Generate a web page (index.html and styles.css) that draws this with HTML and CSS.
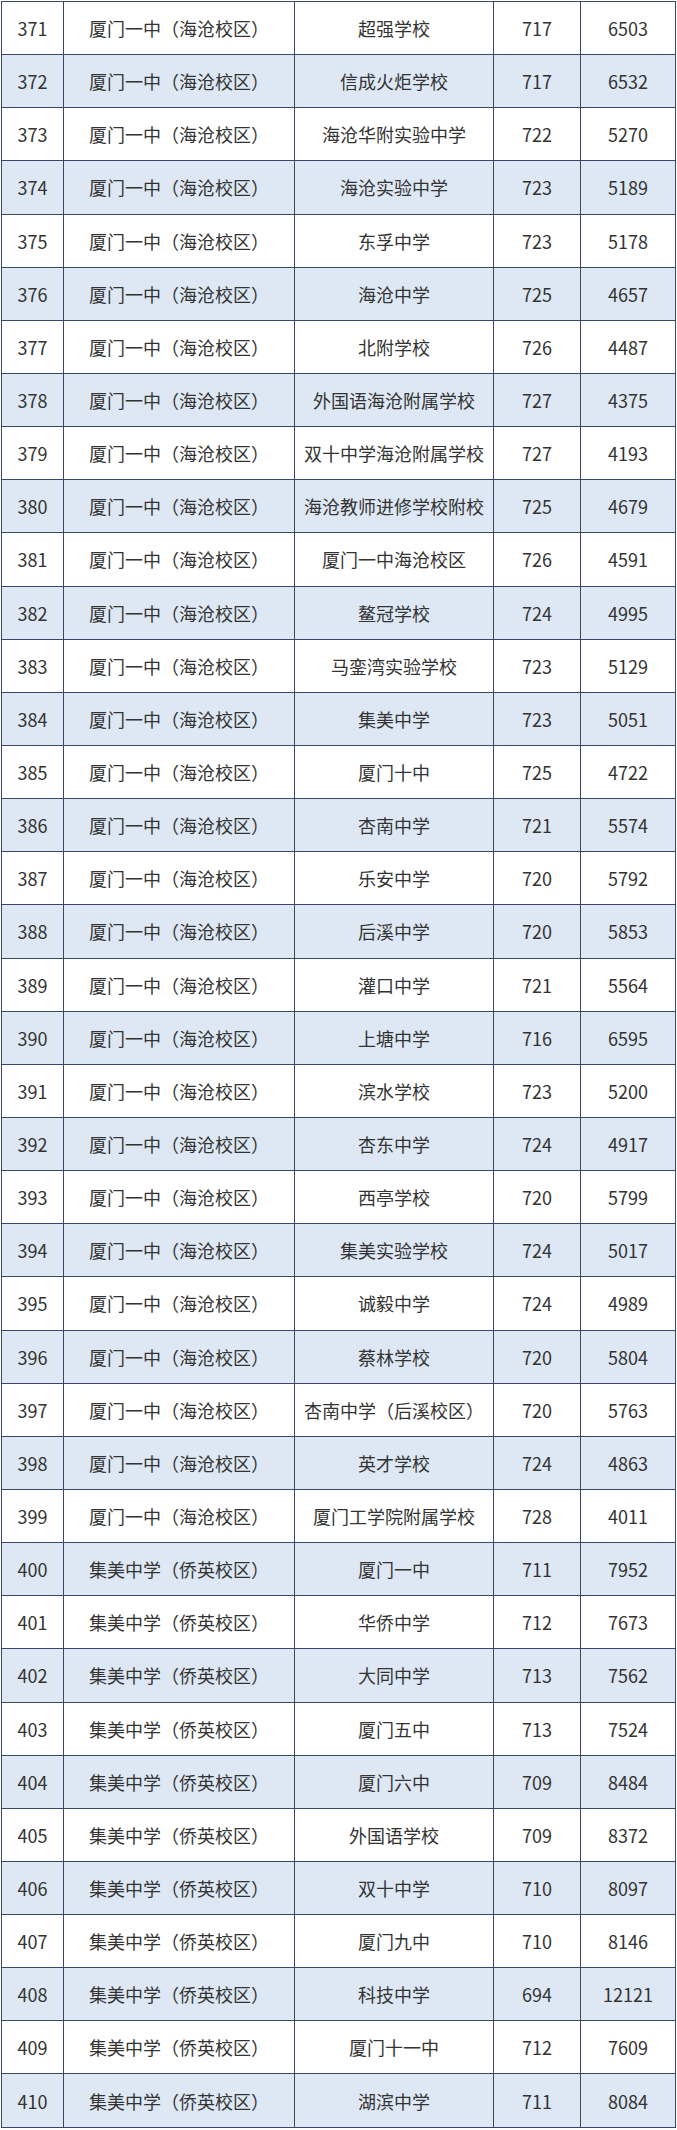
FILE: index.html
```html
<!DOCTYPE html>
<html lang="zh">
<head>
<meta charset="utf-8">
<link rel="stylesheet" href="styles.css">
</head>
<body>
<div class="score-table">
<div class="row"><div>371</div><div>厦门一中（海沧校区）</div><div>超强学校</div><div>717</div><div>6503</div></div>
<div class="row"><div>372</div><div>厦门一中（海沧校区）</div><div>信成火炬学校</div><div>717</div><div>6532</div></div>
<div class="row"><div>373</div><div>厦门一中（海沧校区）</div><div>海沧华附实验中学</div><div>722</div><div>5270</div></div>
<div class="row"><div>374</div><div>厦门一中（海沧校区）</div><div>海沧实验中学</div><div>723</div><div>5189</div></div>
<div class="row"><div>375</div><div>厦门一中（海沧校区）</div><div>东孚中学</div><div>723</div><div>5178</div></div>
<div class="row"><div>376</div><div>厦门一中（海沧校区）</div><div>海沧中学</div><div>725</div><div>4657</div></div>
<div class="row"><div>377</div><div>厦门一中（海沧校区）</div><div>北附学校</div><div>726</div><div>4487</div></div>
<div class="row"><div>378</div><div>厦门一中（海沧校区）</div><div>外国语海沧附属学校</div><div>727</div><div>4375</div></div>
<div class="row"><div>379</div><div>厦门一中（海沧校区）</div><div>双十中学海沧附属学校</div><div>727</div><div>4193</div></div>
<div class="row"><div>380</div><div>厦门一中（海沧校区）</div><div>海沧教师进修学校附校</div><div>725</div><div>4679</div></div>
<div class="row"><div>381</div><div>厦门一中（海沧校区）</div><div>厦门一中海沧校区</div><div>726</div><div>4591</div></div>
<div class="row"><div>382</div><div>厦门一中（海沧校区）</div><div>鳌冠学校</div><div>724</div><div>4995</div></div>
<div class="row"><div>383</div><div>厦门一中（海沧校区）</div><div>马銮湾实验学校</div><div>723</div><div>5129</div></div>
<div class="row"><div>384</div><div>厦门一中（海沧校区）</div><div>集美中学</div><div>723</div><div>5051</div></div>
<div class="row"><div>385</div><div>厦门一中（海沧校区）</div><div>厦门十中</div><div>725</div><div>4722</div></div>
<div class="row"><div>386</div><div>厦门一中（海沧校区）</div><div>杏南中学</div><div>721</div><div>5574</div></div>
<div class="row"><div>387</div><div>厦门一中（海沧校区）</div><div>乐安中学</div><div>720</div><div>5792</div></div>
<div class="row"><div>388</div><div>厦门一中（海沧校区）</div><div>后溪中学</div><div>720</div><div>5853</div></div>
<div class="row"><div>389</div><div>厦门一中（海沧校区）</div><div>灌口中学</div><div>721</div><div>5564</div></div>
<div class="row"><div>390</div><div>厦门一中（海沧校区）</div><div>上塘中学</div><div>716</div><div>6595</div></div>
<div class="row"><div>391</div><div>厦门一中（海沧校区）</div><div>滨水学校</div><div>723</div><div>5200</div></div>
<div class="row"><div>392</div><div>厦门一中（海沧校区）</div><div>杏东中学</div><div>724</div><div>4917</div></div>
<div class="row"><div>393</div><div>厦门一中（海沧校区）</div><div>西亭学校</div><div>720</div><div>5799</div></div>
<div class="row"><div>394</div><div>厦门一中（海沧校区）</div><div>集美实验学校</div><div>724</div><div>5017</div></div>
<div class="row"><div>395</div><div>厦门一中（海沧校区）</div><div>诚毅中学</div><div>724</div><div>4989</div></div>
<div class="row"><div>396</div><div>厦门一中（海沧校区）</div><div>蔡林学校</div><div>720</div><div>5804</div></div>
<div class="row"><div>397</div><div>厦门一中（海沧校区）</div><div>杏南中学（后溪校区）</div><div>720</div><div>5763</div></div>
<div class="row"><div>398</div><div>厦门一中（海沧校区）</div><div>英才学校</div><div>724</div><div>4863</div></div>
<div class="row"><div>399</div><div>厦门一中（海沧校区）</div><div>厦门工学院附属学校</div><div>728</div><div>4011</div></div>
<div class="row"><div>400</div><div>集美中学（侨英校区）</div><div>厦门一中</div><div>711</div><div>7952</div></div>
<div class="row"><div>401</div><div>集美中学（侨英校区）</div><div>华侨中学</div><div>712</div><div>7673</div></div>
<div class="row"><div>402</div><div>集美中学（侨英校区）</div><div>大同中学</div><div>713</div><div>7562</div></div>
<div class="row"><div>403</div><div>集美中学（侨英校区）</div><div>厦门五中</div><div>713</div><div>7524</div></div>
<div class="row"><div>404</div><div>集美中学（侨英校区）</div><div>厦门六中</div><div>709</div><div>8484</div></div>
<div class="row"><div>405</div><div>集美中学（侨英校区）</div><div>外国语学校</div><div>709</div><div>8372</div></div>
<div class="row"><div>406</div><div>集美中学（侨英校区）</div><div>双十中学</div><div>710</div><div>8097</div></div>
<div class="row"><div>407</div><div>集美中学（侨英校区）</div><div>厦门九中</div><div>710</div><div>8146</div></div>
<div class="row"><div>408</div><div>集美中学（侨英校区）</div><div>科技中学</div><div>694</div><div>12121</div></div>
<div class="row"><div>409</div><div>集美中学（侨英校区）</div><div>厦门十一中</div><div>712</div><div>7609</div></div>
<div class="row"><div>410</div><div>集美中学（侨英校区）</div><div>湖滨中学</div><div>711</div><div>8084</div></div>
</div>
</body>
</html>
```
FILE: styles.css
```css
html, body {
  margin: 0;
  padding: 0;
  background: #ffffff;
}
body {
  padding: 1px 0 0 1px;
}
.score-table {
  display: grid;
  grid-template-columns: 62px 231px 199px 87px 95px;
  grid-auto-rows: 53.15px;
  width: max-content;
  border-top: 1.5px solid #3a4868;
  border-left: 1.5px solid #3a4868;
  font-family: "Noto Sans CJK SC", "Noto Sans", sans-serif;
  font-size: 18px;
  color: #333333;
}
.row {
  display: contents;
}
.row > div {
  box-sizing: border-box;
  display: flex;
  align-items: center;
  justify-content: center;
  border-right: 1.5px solid #3a4868;
  border-bottom: 1.5px solid #3a4868;
  white-space: nowrap;
  overflow: hidden;
}
.row:nth-child(even) > div {
  background: #dde8f4;
}
```
